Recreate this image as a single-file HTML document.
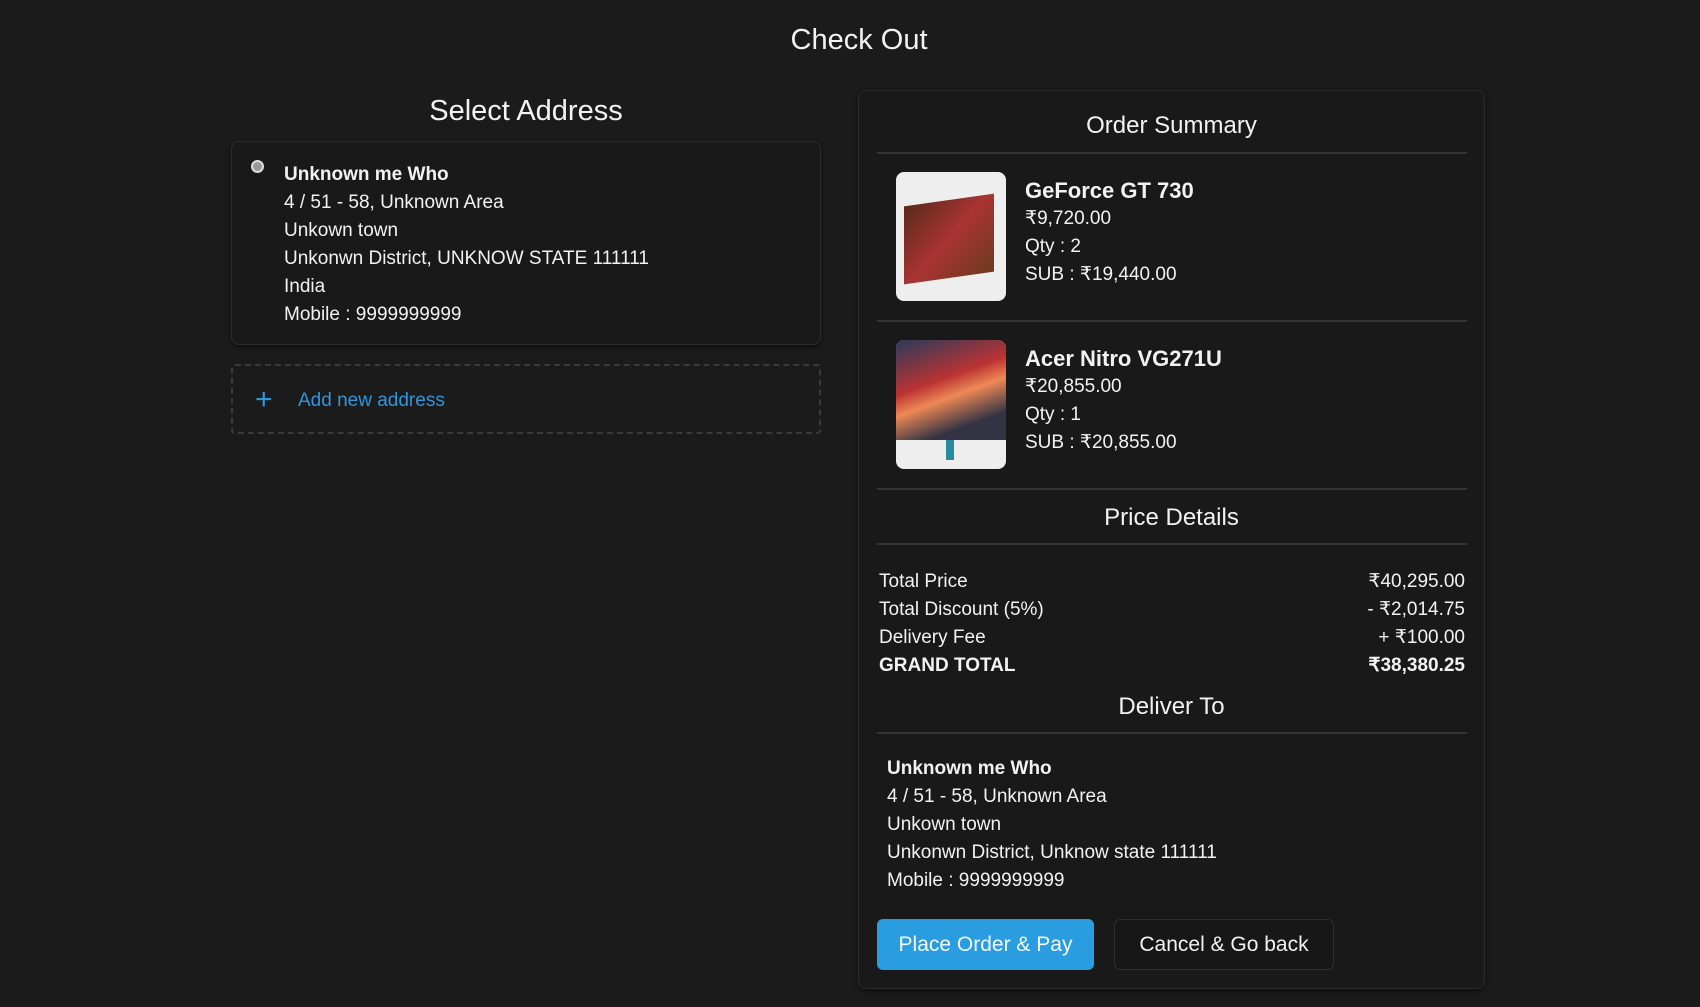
<!DOCTYPE html>
<html><head><meta charset="utf-8"><style>
*{margin:0;padding:0;box-sizing:border-box}
body{width:1700px;height:1007px;background:#1b1b1b;color:#f2f2f2;font-family:"Liberation Sans",sans-serif;position:relative;overflow:hidden}
.a{position:absolute;white-space:nowrap}
.t{font-size:19px;line-height:28px}
.b{font-weight:bold}
.hr{position:absolute;left:877px;width:590px;height:2px;background:#333}
.img{position:absolute;left:896px;width:110px;height:129px;border-radius:8px;overflow:hidden}
</style></head><body>
<div class="a" style="left:0;width:1718px;text-align:center;top:24px;font-size:29px">Check Out</div>
<div class="a" style="left:231px;width:590px;text-align:center;top:95px;font-size:29px">Select Address</div>
<div class="a" style="left:231px;top:141px;width:590px;height:204px;border:1px solid #2c2c2c;border-radius:8px;background:#191919;box-shadow:0 2px 4px rgba(0,0,0,.5)"></div>
<div class="a" style="left:251px;top:160px;width:13px;height:13px;border-radius:50%;background:#999;border:2px solid #ddd"></div>
<div class="a t" style="left:284px;top:161px">
<div class="b">Unknown me Who</div><div>4 / 51 - 58, Unknown Area</div><div>Unkown town</div><div>Unkonwn District, UNKNOW STATE 111111</div><div>India</div><div>Mobile : 9999999999</div></div>
<div class="a" style="left:231px;top:364px;width:590px;height:70px;border:2px dashed #3a3a3a;border-radius:4px"></div>
<div class="a" style="left:255px;top:382px;font-size:30px;color:#2d96dc;line-height:36px">+</div>
<div class="a t" style="left:298px;top:387px;color:#2d96dc">Add new address</div>

<div class="a" style="left:858px;top:90px;width:627px;height:899px;border:1px solid #2a2a2a;border-radius:8px;background:#191919;box-shadow:0 2px 6px rgba(0,0,0,.5)"></div>
<div class="a" style="left:858px;width:627px;text-align:center;top:112px;font-size:24px">Order Summary</div>
<div class="hr" style="top:152px"></div>
<div class="img" style="top:172px;background:#eee"><div style="position:absolute;left:8px;top:28px;width:90px;height:78px;background:linear-gradient(135deg,#5a2a1a,#a33,#6b3a1e);transform:skewY(-8deg)"></div></div>
<div class="a t" style="left:1025px;top:177px"><div class="b" style="font-size:22px">GeForce GT 730</div><div>₹9,720.00</div><div>Qty : 2</div><div>SUB : ₹19,440.00</div></div>
<div class="hr" style="top:320px"></div>
<div class="img" style="top:340px;background:#eee"><div style="position:absolute;left:0;top:0;width:110px;height:100px;background:linear-gradient(160deg,#2a3a5a,#b33 40%,#e85 55%,#334 80%)"></div><div style="position:absolute;left:50px;top:100px;width:8px;height:20px;background:#2a8aa0"></div></div>
<div class="a t" style="left:1025px;top:345px"><div class="b" style="font-size:22px">Acer Nitro VG271U</div><div>₹20,855.00</div><div>Qty : 1</div><div>SUB : ₹20,855.00</div></div>
<div class="hr" style="top:488px"></div>
<div class="a" style="left:858px;width:627px;text-align:center;top:504px;font-size:24px">Price Details</div>
<div class="hr" style="top:543px"></div>
<div class="a t" style="left:879px;top:568px"><div>Total Price</div><div>Total Discount (5%)</div><div>Delivery Fee</div><div class="b">GRAND TOTAL</div></div>
<div class="a t" style="right:235px;top:568px;text-align:right"><div>₹40,295.00</div><div>- ₹2,014.75</div><div>+ ₹100.00</div><div class="b">₹38,380.25</div></div>
<div class="a" style="left:858px;width:627px;text-align:center;top:693px;font-size:24px">Deliver To</div>
<div class="hr" style="top:732px"></div>
<div class="a t" style="left:887px;top:755px"><div class="b">Unknown me Who</div><div>4 / 51 - 58, Unknown Area</div><div>Unkown town</div><div>Unkonwn District, Unknow state 111111</div><div>Mobile : 9999999999</div></div>
<div class="a" style="left:877px;top:919px;width:217px;height:51px;background:#2a9de0;border-radius:6px;text-align:center;line-height:51px;font-size:21px;color:#f4f8ff">Place Order &amp; Pay</div>
<div class="a" style="left:1114px;top:919px;width:220px;height:51px;border:1px solid #2e2e2e;background:#171717;border-radius:6px;text-align:center;line-height:49px;font-size:21px">Cancel &amp; Go back</div>
</body></html>
